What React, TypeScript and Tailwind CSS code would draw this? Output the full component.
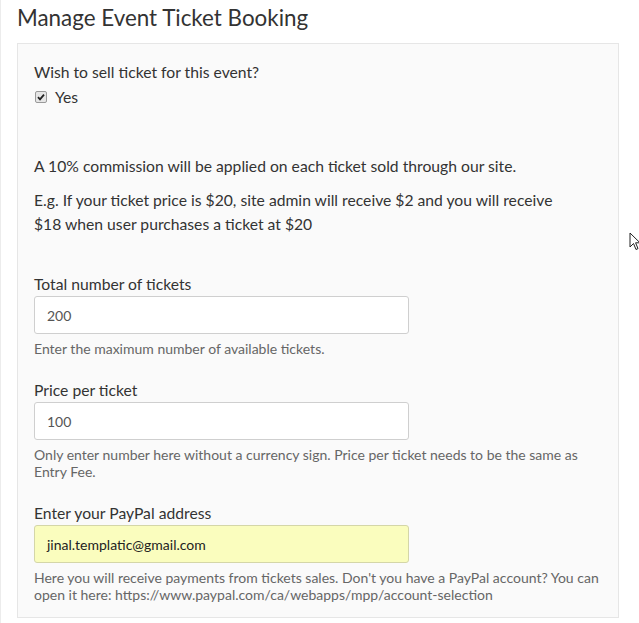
const font = { fontFamily: "Lato, 'Noto Sans', sans-serif" };

export default function App() {
  return (
    <div className="relative min-h-[623px] w-[639px] border-l border-[#ececec] bg-white text-[#333]" style={font}>
      <div className="pl-[16px] pr-[20px]">
        <h2 className="pt-[4px] text-[22.4px] leading-[28px] text-[#333]">Manage Event Ticket Booking</h2>
        <div className="mt-[11px] border border-[#e6e6e6] bg-[#fafafa] px-[16px] pb-[14px] pt-[16px]">
          <p className="text-[15.7px] leading-[24px]">Wish to sell ticket for this event?</p>
          <label className="mt-[1px] flex items-center gap-[8px] text-[15.7px] leading-[24px]">
            <span className="ml-[1px] flex h-[12px] w-[12px] items-center justify-center rounded-[2px] border border-[#9a9a9a] bg-[#e6e6e6]">
              <svg viewBox="0 0 10 10" className="h-[10px] w-[10px]">
                <path d="M2 5.2 L4 7.3 L8 2.6" fill="none" stroke="#222" strokeWidth="1.8" />
              </svg>
            </span>
            Yes
          </label>

          <p className="mt-[45px] text-[15.7px] leading-[24px]">
            A 10% commission will be applied on each ticket sold through our site.
          </p>
          <p className="mt-[10px] max-w-[540px] text-[15.7px] leading-[24px]">
            E.g. If your ticket price is $20, site admin will receive $2 and you will receive $18 when user purchases a
            ticket at $20
          </p>

          <Field
            className="mt-[36px]"
            label="Total number of tickets"
            value="200"
            help="Enter the maximum number of available tickets."
          />
          <Field
            className="mt-[21px]"
            label="Price per ticket"
            value="100"
            help="Only enter number here without a currency sign. Price per ticket needs to be the same as Entry Fee."
          />
          <Field
            className="mt-[21px]"
            label="Enter your PayPal address"
            value="jinal.templatic@gmail.com"
            help="Here you will receive payments from tickets sales. Don't you have a PayPal account? You can open it here: https://www.paypal.com/ca/webapps/mpp/account-selection"
            filled
          />
        </div>
      </div>

      <svg viewBox="0 0 12 19" className="absolute left-[628px] top-[232px] h-[19px] w-[12px]">
        <path
          d="M1 1 L1 15 L4.5 11.5 L7 17.5 L9 16.6 L6.6 10.8 L11 10.8 Z"
          fill="white"
          stroke="#222"
          strokeWidth="1"
          strokeLinejoin="round"
        />
      </svg>
    </div>
  );
}

function Field({
  label,
  value,
  help,
  filled,
  className,
}: {
  label: string;
  value: string;
  help: string;
  filled?: boolean;
  className?: string;
}) {
  return (
    <div className={className}>
      <p className="text-[15.7px] leading-[24px]">{label}</p>
      <div
        className={
          filled
            ? "flex h-[38px] w-[375px] items-center rounded-[3px] border border-[#d4d6a8] bg-[#fafdbe] px-[12px] text-[14px] text-[#222]"
            : "flex h-[38px] w-[375px] items-center rounded-[3px] border border-[#cfcfcf] bg-white px-[12px] text-[14px] text-[#555]"
        }
      >
        {value}
      </div>
      <p className="mt-[6px] text-[14px] leading-[17px] text-[#666]">{help}</p>
    </div>
  );
}
